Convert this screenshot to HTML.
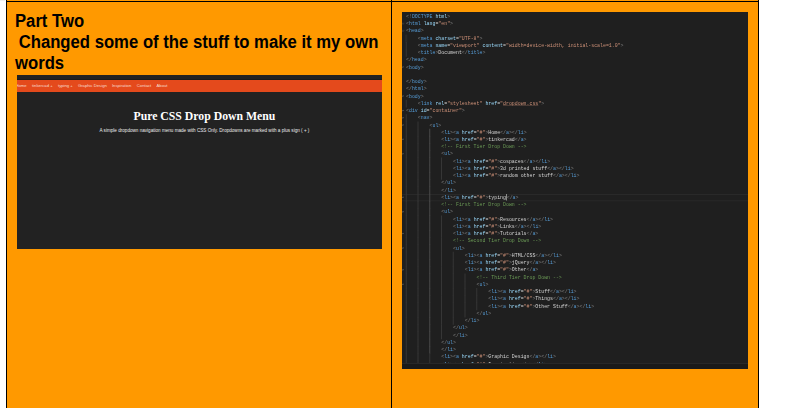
<!DOCTYPE html>
<html><head><meta charset="utf-8">
<style>
*{margin:0;padding:0;box-sizing:border-box}
html,body{width:794px;height:408px;overflow:hidden;background:#fff;position:relative;font-family:"Liberation Sans",sans-serif}
.abs{position:absolute}
#cellL{left:7px;top:0;width:384px;height:408px;background:#ff9900}
#cellR{left:392px;top:0;width:366px;height:408px;background:#ff9900}
.vl{position:absolute;top:0;width:1px;height:408px;background:#000}
.hl{position:absolute;top:1px;height:1px;left:6px;width:753px;background:#000}
.corner{position:absolute;left:0;top:0;width:5px;height:1px;background:#eee}
.h2{position:absolute;font:bold 18px/20.75px "Liberation Sans",sans-serif;color:#000;white-space:pre;transform-origin:0 0;transform:scaleX(0.926)}
/* left shot */
#shotL{position:absolute;left:17px;top:75px;width:365px;height:174px;background:#222;overflow:hidden}
#inL{position:absolute;left:0;top:0;width:1460px;height:696px;transform-origin:0 0;transform:scale(0.25)}
#inL .nav{position:absolute;left:0;top:20px;width:1460px;height:48px;background:#e44a1c;box-shadow:0 -2px 0 #151515}
#inL .nav span{position:absolute;top:16.2px;line-height:16.8px;font-size:16.8px;color:#f8ddd0;white-space:nowrap}
#inL .title{position:absolute;left:349.6px;top:140.6px;width:800px;text-align:center;font:bold 47px/47px "Liberation Serif",serif;color:#fff;white-space:nowrap}
#inL .sub{position:absolute;left:249.8px;top:211.2px;width:1000px;text-align:center;font:18.4px/18.4px "Liberation Sans",sans-serif;color:#ececec;white-space:nowrap}
/* right shot */
#shotR{position:absolute;left:402px;top:12px;width:346px;height:357px;background:#1f1f1f;overflow:hidden}
#shotR .strip{position:absolute;left:0;top:351px;width:346px;height:6px;background:#1a1a1a;border-top:1px solid #282828}
#code{position:absolute;left:3.8px;top:1.36px;transform-origin:0 0;transform:scale(0.25);font:19.6px/28.976px "Liberation Mono",monospace;color:#d4d4d4;white-space:pre}
.cl{position:absolute;left:-20px;top:724.4px;width:1420px;height:28.976px;border-top:4px solid #292929;border-bottom:4px solid #292929}
.ln{position:relative;height:28.976px}
.g{position:absolute;top:-1px;margin-left:-1.5px;width:4px;height:31px;background:#363636}
.f{position:absolute;left:-16px;top:8px;width:7px;height:7px;border-right:2px solid #666;border-bottom:2px solid #666;transform:rotate(45deg)}
.g.act{background:#4a4a4a}
.cur{display:inline-block;width:0;height:26px;border-left:3px solid #aeafad;vertical-align:-6px}
.t{color:#569cd6}.b{color:#808080}.a{color:#9cdcfe}.s{color:#ce9178}.c{color:#6a9955}
</style></head><body>
<div class="corner"></div>
<div id="cellL" class="abs"></div>
<div id="cellR" class="abs"></div>
<div class="vl" style="left:6px"></div>
<div class="vl" style="left:391px"></div>
<div class="vl" style="left:758px"></div>
<div class="hl"></div>
<div class="h2" style="left:15px;top:11.4px">Part Two</div>
<div class="h2" style="left:14.2px;top:31.8px;transform:scaleX(0.927)"> Changed some of the stuff to make it my own</div>
<div class="h2" style="left:15px;top:52.9px">words</div>
<div id="shotL"><div id="inL">
  <div class="nav">
    <span style="left:-6px">Home</span>
    <span style="left:60px">tinkercad +</span>
    <span style="left:164px">typing +</span>
    <span style="left:243.6px">Graphic Design</span>
    <span style="left:379.6px">Inspiration</span>
    <span style="left:479.2px">Contact</span>
    <span style="left:558px">About</span>
  </div>
  <div class="title">Pure CSS Drop Down Menu</div>
  <div class="sub">A simple dropdown navigation menu made with CSS Only. Dropdowns are marked with a plus sign ( + )</div>
</div></div>
<div id="shotR">
<div id="code"><div class="cl"></div><div class="ln"><span class="b">&lt;!</span><span class="t">DOCTYPE</span><span class="a"> html</span><span class="b">&gt;</span></div><div class="ln"><b class="f"></b><span class="b">&lt;</span><span class="t">html</span> <span class="a">lang</span>=<span class="s">"en"</span><span class="b">&gt;</span></div><div class="ln"><b class="f"></b><span class="b">&lt;</span><span class="t">head</span><span class="b">&gt;</span></div><div class="ln"><i class="g" style="left:0.0em"></i>    <span class="b">&lt;</span><span class="t">meta</span> <span class="a">charset</span>=<span class="s">"UTF-8"</span><span class="b">&gt;</span></div><div class="ln"><i class="g" style="left:0.0em"></i>    <span class="b">&lt;</span><span class="t">meta</span> <span class="a">name</span>=<span class="s">"viewport"</span> <span class="a">content</span>=<span class="s">"width=device-width, initial-scale=1.0"</span><span class="b">&gt;</span></div><div class="ln"><i class="g" style="left:0.0em"></i>    <span class="b">&lt;</span><span class="t">title</span><span class="b">&gt;</span>Document<span class="b">&lt;/</span><span class="t">title</span><span class="b">&gt;</span></div><div class="ln"><span class="b">&lt;/</span><span class="t">head</span><span class="b">&gt;</span></div><div class="ln"><b class="f"></b><span class="b">&lt;</span><span class="t">body</span><span class="b">&gt;</span></div><div class="ln"></div><div class="ln"><span class="b">&lt;/</span><span class="t">body</span><span class="b">&gt;</span></div><div class="ln"><span class="b">&lt;/</span><span class="t">html</span><span class="b">&gt;</span></div><div class="ln"><b class="f"></b><span class="b">&lt;</span><span class="t">body</span><span class="b">&gt;</span></div><div class="ln"><i class="g" style="left:0.0em"></i>    <span class="b">&lt;</span><span class="t">link</span> <span class="a">rel</span>=<span class="s">"stylesheet"</span> <span class="a">href</span>=<span class="s">"<u>dropdown.css</u>"</span><span class="b">&gt;</span></div><div class="ln"><b class="f"></b><span class="b">&lt;</span><span class="t">div</span> <span class="a">id</span>=<span class="s">"container"</span><span class="b">&gt;</span></div><div class="ln"><b class="f"></b><i class="g" style="left:0.0em"></i>    <span class="b">&lt;</span><span class="t">nav</span><span class="b">&gt;</span></div><div class="ln"><b class="f"></b><i class="g" style="left:0.0em"></i><i class="g" style="left:2.4em"></i>        <span class="b">&lt;</span><span class="t">ul</span><span class="b">&gt;</span></div><div class="ln"><i class="g" style="left:0.0em"></i><i class="g" style="left:2.4em"></i><i class="g act" style="left:4.8em"></i>            <span class="b">&lt;</span><span class="t">li</span><span class="b">&gt;</span><span class="b">&lt;</span><span class="t">a</span> <span class="a">href</span>=<span class="s">"#"</span><span class="b">&gt;</span>Home<span class="b">&lt;/</span><span class="t">a</span><span class="b">&gt;</span><span class="b">&lt;/</span><span class="t">li</span><span class="b">&gt;</span></div><div class="ln"><b class="f"></b><i class="g" style="left:0.0em"></i><i class="g" style="left:2.4em"></i><i class="g act" style="left:4.8em"></i>            <span class="b">&lt;</span><span class="t">li</span><span class="b">&gt;</span><span class="b">&lt;</span><span class="t">a</span> <span class="a">href</span>=<span class="s">"#"</span><span class="b">&gt;</span>tinkercad<span class="b">&lt;/</span><span class="t">a</span><span class="b">&gt;</span></div><div class="ln"><i class="g" style="left:0.0em"></i><i class="g" style="left:2.4em"></i><i class="g act" style="left:4.8em"></i>            <span class="c">&lt;!-- First Tier Drop Down --&gt;</span></div><div class="ln"><b class="f"></b><i class="g" style="left:0.0em"></i><i class="g" style="left:2.4em"></i><i class="g act" style="left:4.8em"></i>            <span class="b">&lt;</span><span class="t">ul</span><span class="b">&gt;</span></div><div class="ln"><i class="g" style="left:0.0em"></i><i class="g" style="left:2.4em"></i><i class="g act" style="left:4.8em"></i><i class="g" style="left:7.199999999999999em"></i>                <span class="b">&lt;</span><span class="t">li</span><span class="b">&gt;</span><span class="b">&lt;</span><span class="t">a</span> <span class="a">href</span>=<span class="s">"#"</span><span class="b">&gt;</span>cospaces<span class="b">&lt;/</span><span class="t">a</span><span class="b">&gt;</span><span class="b">&lt;/</span><span class="t">li</span><span class="b">&gt;</span></div><div class="ln"><i class="g" style="left:0.0em"></i><i class="g" style="left:2.4em"></i><i class="g act" style="left:4.8em"></i><i class="g" style="left:7.199999999999999em"></i>                <span class="b">&lt;</span><span class="t">li</span><span class="b">&gt;</span><span class="b">&lt;</span><span class="t">a</span> <span class="a">href</span>=<span class="s">"#"</span><span class="b">&gt;</span>3d printed stuff<span class="b">&lt;/</span><span class="t">a</span><span class="b">&gt;</span><span class="b">&lt;/</span><span class="t">li</span><span class="b">&gt;</span></div><div class="ln"><i class="g" style="left:0.0em"></i><i class="g" style="left:2.4em"></i><i class="g act" style="left:4.8em"></i><i class="g" style="left:7.199999999999999em"></i>                <span class="b">&lt;</span><span class="t">li</span><span class="b">&gt;</span><span class="b">&lt;</span><span class="t">a</span> <span class="a">href</span>=<span class="s">"#"</span><span class="b">&gt;</span>random other stuff<span class="b">&lt;/</span><span class="t">a</span><span class="b">&gt;</span><span class="b">&lt;/</span><span class="t">li</span><span class="b">&gt;</span></div><div class="ln"><i class="g" style="left:0.0em"></i><i class="g" style="left:2.4em"></i><i class="g act" style="left:4.8em"></i>            <span class="b">&lt;/</span><span class="t">ul</span><span class="b">&gt;</span></div><div class="ln"><i class="g" style="left:0.0em"></i><i class="g" style="left:2.4em"></i><i class="g act" style="left:4.8em"></i>            <span class="b">&lt;/</span><span class="t">li</span><span class="b">&gt;</span></div><div class="ln"><b class="f"></b><i class="g" style="left:0.0em"></i><i class="g" style="left:2.4em"></i><i class="g act" style="left:4.8em"></i>            <span class="b">&lt;</span><span class="t">li</span><span class="b">&gt;</span><span class="b">&lt;</span><span class="t">a</span> <span class="a">href</span>=<span class="s">"#"</span><span class="b">&gt;</span>typing<i class="cur"></i><span class="b">&lt;/</span><span class="t">a</span><span class="b">&gt;</span></div><div class="ln"><i class="g" style="left:0.0em"></i><i class="g" style="left:2.4em"></i><i class="g act" style="left:4.8em"></i>            <span class="c">&lt;!-- First Tier Drop Down --&gt;</span></div><div class="ln"><b class="f"></b><i class="g" style="left:0.0em"></i><i class="g" style="left:2.4em"></i><i class="g act" style="left:4.8em"></i>            <span class="b">&lt;</span><span class="t">ul</span><span class="b">&gt;</span></div><div class="ln"><i class="g" style="left:0.0em"></i><i class="g" style="left:2.4em"></i><i class="g act" style="left:4.8em"></i><i class="g" style="left:7.199999999999999em"></i>                <span class="b">&lt;</span><span class="t">li</span><span class="b">&gt;</span><span class="b">&lt;</span><span class="t">a</span> <span class="a">href</span>=<span class="s">"#"</span><span class="b">&gt;</span>Resources<span class="b">&lt;/</span><span class="t">a</span><span class="b">&gt;</span><span class="b">&lt;/</span><span class="t">li</span><span class="b">&gt;</span></div><div class="ln"><i class="g" style="left:0.0em"></i><i class="g" style="left:2.4em"></i><i class="g act" style="left:4.8em"></i><i class="g" style="left:7.199999999999999em"></i>                <span class="b">&lt;</span><span class="t">li</span><span class="b">&gt;</span><span class="b">&lt;</span><span class="t">a</span> <span class="a">href</span>=<span class="s">"#"</span><span class="b">&gt;</span>Links<span class="b">&lt;/</span><span class="t">a</span><span class="b">&gt;</span><span class="b">&lt;/</span><span class="t">li</span><span class="b">&gt;</span></div><div class="ln"><b class="f"></b><i class="g" style="left:0.0em"></i><i class="g" style="left:2.4em"></i><i class="g act" style="left:4.8em"></i><i class="g" style="left:7.199999999999999em"></i>                <span class="b">&lt;</span><span class="t">li</span><span class="b">&gt;</span><span class="b">&lt;</span><span class="t">a</span> <span class="a">href</span>=<span class="s">"#"</span><span class="b">&gt;</span>Tutorials<span class="b">&lt;/</span><span class="t">a</span><span class="b">&gt;</span></div><div class="ln"><i class="g" style="left:0.0em"></i><i class="g" style="left:2.4em"></i><i class="g act" style="left:4.8em"></i><i class="g" style="left:7.199999999999999em"></i>                <span class="c">&lt;!-- Second Tier Drop Down --&gt;</span></div><div class="ln"><b class="f"></b><i class="g" style="left:0.0em"></i><i class="g" style="left:2.4em"></i><i class="g act" style="left:4.8em"></i><i class="g" style="left:7.199999999999999em"></i>                <span class="b">&lt;</span><span class="t">ul</span><span class="b">&gt;</span></div><div class="ln"><i class="g" style="left:0.0em"></i><i class="g" style="left:2.4em"></i><i class="g act" style="left:4.8em"></i><i class="g" style="left:7.199999999999999em"></i><i class="g" style="left:9.6em"></i>                    <span class="b">&lt;</span><span class="t">li</span><span class="b">&gt;</span><span class="b">&lt;</span><span class="t">a</span> <span class="a">href</span>=<span class="s">"#"</span><span class="b">&gt;</span>HTML/CSS<span class="b">&lt;/</span><span class="t">a</span><span class="b">&gt;</span><span class="b">&lt;/</span><span class="t">li</span><span class="b">&gt;</span></div><div class="ln"><i class="g" style="left:0.0em"></i><i class="g" style="left:2.4em"></i><i class="g act" style="left:4.8em"></i><i class="g" style="left:7.199999999999999em"></i><i class="g" style="left:9.6em"></i>                    <span class="b">&lt;</span><span class="t">li</span><span class="b">&gt;</span><span class="b">&lt;</span><span class="t">a</span> <span class="a">href</span>=<span class="s">"#"</span><span class="b">&gt;</span>jQuery<span class="b">&lt;/</span><span class="t">a</span><span class="b">&gt;</span><span class="b">&lt;/</span><span class="t">li</span><span class="b">&gt;</span></div><div class="ln"><b class="f"></b><i class="g" style="left:0.0em"></i><i class="g" style="left:2.4em"></i><i class="g act" style="left:4.8em"></i><i class="g" style="left:7.199999999999999em"></i><i class="g" style="left:9.6em"></i>                    <span class="b">&lt;</span><span class="t">li</span><span class="b">&gt;</span><span class="b">&lt;</span><span class="t">a</span> <span class="a">href</span>=<span class="s">"#"</span><span class="b">&gt;</span>Other<span class="b">&lt;/</span><span class="t">a</span><span class="b">&gt;</span></div><div class="ln"><i class="g" style="left:0.0em"></i><i class="g" style="left:2.4em"></i><i class="g act" style="left:4.8em"></i><i class="g" style="left:7.199999999999999em"></i><i class="g" style="left:9.6em"></i><i class="g" style="left:12.0em"></i>                        <span class="c">&lt;!-- Third Tier Drop Down --&gt;</span></div><div class="ln"><b class="f"></b><i class="g" style="left:0.0em"></i><i class="g" style="left:2.4em"></i><i class="g act" style="left:4.8em"></i><i class="g" style="left:7.199999999999999em"></i><i class="g" style="left:9.6em"></i><i class="g" style="left:12.0em"></i>                        <span class="b">&lt;</span><span class="t">ul</span><span class="b">&gt;</span></div><div class="ln"><i class="g" style="left:0.0em"></i><i class="g" style="left:2.4em"></i><i class="g act" style="left:4.8em"></i><i class="g" style="left:7.199999999999999em"></i><i class="g" style="left:9.6em"></i><i class="g" style="left:12.0em"></i><i class="g" style="left:14.399999999999999em"></i>                            <span class="b">&lt;</span><span class="t">li</span><span class="b">&gt;</span><span class="b">&lt;</span><span class="t">a</span> <span class="a">href</span>=<span class="s">"#"</span><span class="b">&gt;</span>Stuff<span class="b">&lt;/</span><span class="t">a</span><span class="b">&gt;</span><span class="b">&lt;/</span><span class="t">li</span><span class="b">&gt;</span></div><div class="ln"><i class="g" style="left:0.0em"></i><i class="g" style="left:2.4em"></i><i class="g act" style="left:4.8em"></i><i class="g" style="left:7.199999999999999em"></i><i class="g" style="left:9.6em"></i><i class="g" style="left:12.0em"></i><i class="g" style="left:14.399999999999999em"></i>                            <span class="b">&lt;</span><span class="t">li</span><span class="b">&gt;</span><span class="b">&lt;</span><span class="t">a</span> <span class="a">href</span>=<span class="s">"#"</span><span class="b">&gt;</span>Things<span class="b">&lt;/</span><span class="t">a</span><span class="b">&gt;</span><span class="b">&lt;/</span><span class="t">li</span><span class="b">&gt;</span></div><div class="ln"><i class="g" style="left:0.0em"></i><i class="g" style="left:2.4em"></i><i class="g act" style="left:4.8em"></i><i class="g" style="left:7.199999999999999em"></i><i class="g" style="left:9.6em"></i><i class="g" style="left:12.0em"></i><i class="g" style="left:14.399999999999999em"></i>                            <span class="b">&lt;</span><span class="t">li</span><span class="b">&gt;</span><span class="b">&lt;</span><span class="t">a</span> <span class="a">href</span>=<span class="s">"#"</span><span class="b">&gt;</span>Other Stuff<span class="b">&lt;/</span><span class="t">a</span><span class="b">&gt;</span><span class="b">&lt;/</span><span class="t">li</span><span class="b">&gt;</span></div><div class="ln"><i class="g" style="left:0.0em"></i><i class="g" style="left:2.4em"></i><i class="g act" style="left:4.8em"></i><i class="g" style="left:7.199999999999999em"></i><i class="g" style="left:9.6em"></i><i class="g" style="left:12.0em"></i>                        <span class="b">&lt;/</span><span class="t">ul</span><span class="b">&gt;</span></div><div class="ln"><i class="g" style="left:0.0em"></i><i class="g" style="left:2.4em"></i><i class="g act" style="left:4.8em"></i><i class="g" style="left:7.199999999999999em"></i><i class="g" style="left:9.6em"></i>                    <span class="b">&lt;/</span><span class="t">li</span><span class="b">&gt;</span></div><div class="ln"><i class="g" style="left:0.0em"></i><i class="g" style="left:2.4em"></i><i class="g act" style="left:4.8em"></i><i class="g" style="left:7.199999999999999em"></i>                <span class="b">&lt;/</span><span class="t">ul</span><span class="b">&gt;</span></div><div class="ln"><i class="g" style="left:0.0em"></i><i class="g" style="left:2.4em"></i><i class="g act" style="left:4.8em"></i><i class="g" style="left:7.199999999999999em"></i>                <span class="b">&lt;/</span><span class="t">li</span><span class="b">&gt;</span></div><div class="ln"><i class="g" style="left:0.0em"></i><i class="g" style="left:2.4em"></i><i class="g act" style="left:4.8em"></i>            <span class="b">&lt;/</span><span class="t">ul</span><span class="b">&gt;</span></div><div class="ln"><i class="g" style="left:0.0em"></i><i class="g" style="left:2.4em"></i><i class="g act" style="left:4.8em"></i>            <span class="b">&lt;/</span><span class="t">li</span><span class="b">&gt;</span></div><div class="ln"><i class="g" style="left:0.0em"></i><i class="g" style="left:2.4em"></i><i class="g" style="left:4.8em"></i>            <span class="b">&lt;</span><span class="t">li</span><span class="b">&gt;</span><span class="b">&lt;</span><span class="t">a</span> <span class="a">href</span>=<span class="s">"#"</span><span class="b">&gt;</span>Graphic Design<span class="b">&lt;/</span><span class="t">a</span><span class="b">&gt;</span><span class="b">&lt;/</span><span class="t">li</span><span class="b">&gt;</span></div><div class="ln"><i class="g" style="left:0.0em"></i><i class="g" style="left:2.4em"></i><i class="g" style="left:4.8em"></i>            <span class="b">&lt;</span><span class="t">li</span><span class="b">&gt;</span><span class="b">&lt;</span><span class="t">a</span> <span class="a">href</span>=<span class="s">"#"</span><span class="b">&gt;</span>Inspiration<span class="b">&lt;/</span><span class="t">a</span><span class="b">&gt;</span><span class="b">&lt;/</span><span class="t">li</span><span class="b">&gt;</span></div></div>
<div class="strip"></div>
</div>
</body></html>
